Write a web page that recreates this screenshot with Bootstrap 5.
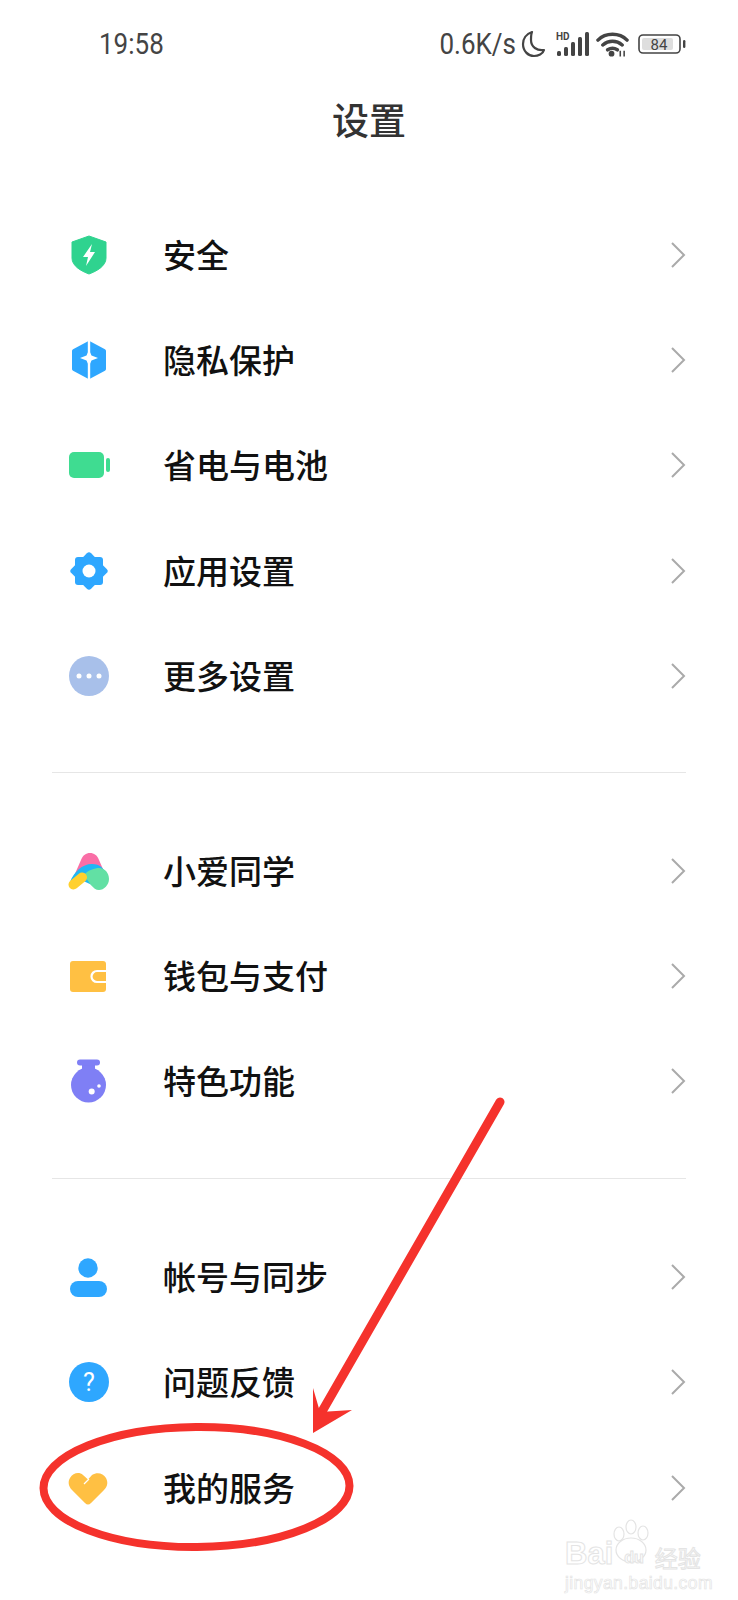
<!DOCTYPE html>
<html lang="zh">
<head>
  <meta charset="UTF-8">
  <meta name="viewport" content="width=device-width, initial-scale=1.0">
  <title>设置</title>
  <link href="https://cdn.jsdelivr.net/npm/bootstrap@5.3.0/dist/css/bootstrap.min.css" rel="stylesheet">
  <style>
    body { background: #fff; font-family: "Noto Sans CJK SC", "Noto Sans", sans-serif; }
    .phone-screen { position: relative; width: 738px; height: 1600px; overflow: hidden; }
    .status-row { height: 88px; padding: 0 52px 0 99px; font: 400 26px Roboto, sans-serif; color: #444; }
    .status-text { display: inline-block; transform: scaleY(1.14); }
    .status-icons { gap: 5px; }
    .page-title { height: 62px; margin: 0; font-size: 37px; font-weight: 500; line-height: 62px; color: #333; }
    .settings-list { --bs-list-group-border-width: 0; --bs-list-group-bg: transparent; }
    .settings-list .list-group-item { height: 105.4px; padding: 0 52px 0 67px; }
    .settings-list svg.row-icon { flex: none; width: 44px; height: 44px; }
    .row-label { margin-left: 52px; font-size: 33px; font-weight: 500; color: #111; line-height: 1; padding-bottom: 1px; }
    .row-arrow { flex: none; width: 16px; height: 28px; }
    .first-group { margin-top: 52px; }
    .group-rule { margin: 0 52px; height: 1px; background: #e6e6e6; }
    .rule-one { margin-top: 43px; margin-bottom: 45px; }
    .rule-two { margin-top: 44px; margin-bottom: 45px; }
    .markup-layer { position: absolute; inset: 0; width: 738px; height: 1600px; pointer-events: none; }
    .baidu-mark { position: absolute; left: 565px; top: 1538px; width: 140px; color: #fff; -webkit-text-stroke: 1px #e4e4e4; font-family: "Liberation Sans", sans-serif; }
    .baidu-paw { position: absolute; left: 42px; top: -20px; width: 50px; height: 50px; }
    .baidu-top { align-items: flex-end; line-height: 1; }
    .baidu-big { font-size: 31px; font-weight: 700; }
    .baidu-du { font-size: 16px; font-weight: 700; margin: 0 0 3px 11px; }
    .baidu-cn { font-size: 23px; font-family: "Noto Sans CJK SC", sans-serif; margin-left: 11px; }
    .baidu-url { font-size: 17.5px; line-height: 1; margin-top: 6px; letter-spacing: .4px; -webkit-text-stroke: .7px #e4e4e4; }
  </style>
</head>
<body>
<div class="phone-screen">

  <!-- status bar -->
  <div class="status-row d-flex align-items-center justify-content-between">
    <span class="status-text">19:58</span>
    <div class="status-icons d-flex align-items-center">
      <span class="status-text">0.6K/s</span>
      <svg width="25" height="28" viewBox="0 0 25 28"><path d="M11 2C5 4 2 9 2 14c0 7 5 12 11 12 4 0 9-2 10-6-7 1-13-3-13-10 0-3 0-6 1-8z" fill="none" stroke="#444" stroke-width="2.2" stroke-linejoin="round"/></svg>
      <svg width="36" height="28" viewBox="0 0 36 28" class="ms-1">
        <text x="1" y="10" font-family="Roboto, sans-serif" font-size="10" font-weight="700" fill="#444">HD</text>
        <rect x="2" y="21" width="4" height="5" rx="1.5" fill="#444"/>
        <rect x="9" y="17" width="4" height="9" rx="1.5" fill="#444"/>
        <rect x="16" y="12" width="4" height="14" rx="1.5" fill="#444"/>
        <rect x="23" y="7" width="4" height="19" rx="1.5" fill="#444"/>
        <rect x="30" y="2" width="4" height="24" rx="1.5" fill="#444"/>
      </svg>
      <svg width="33" height="28" viewBox="0 0 34 28">
        <path d="M2 10C10 2 24 2 32 10M7 15c6-5 14-5 20 0M12 20c3-2 7-2 10 0" fill="none" stroke="#444" stroke-width="3.600" stroke-linecap="round"/>
        <circle cx="16" cy="24" r="3" fill="#444"/>
        <path d="M25 21v6M29 21v6" stroke="#444" stroke-width="1.600"/>
      </svg>
      <svg width="48" height="20" viewBox="0 0 48 20" class="ms-1">
        <rect x="1" y="1" width="41" height="18" rx="4" fill="#fff" stroke="#444" stroke-width="1.600"/>
        <rect x="4" y="4" width="31" height="12" rx="2" fill="#dedede"/>
        <text x="21" y="15.500" text-anchor="middle" font-family="Roboto, sans-serif" font-size="15" fill="#444">84</text>
        <rect x="45" y="6" width="2.400" height="8" rx="1.200" fill="#444"/>
      </svg>
    </div>
  </div>

  <h1 class="page-title text-center">设置</h1>

  <div class="list-group list-group-flush settings-list first-group">
    <div class="list-group-item d-flex align-items-center">
      <svg class="row-icon" viewBox="0 0 44 44"><path d="M22 3l17 6v16c0 8-9 13-17 16C14 38 5 33 5 25V9z" fill="#2fd38f" stroke="#2fd38f" stroke-width="1" stroke-linejoin="round"/><path d="M25 11l-9 13h5l-2 9 9-14h-5z" fill="#fff"/></svg>
      <span class="row-label">安全</span>
      <svg class="row-arrow ms-auto" viewBox="0 0 16 28"><path d="M2 2l12 12L2 26" fill="none" stroke="#aaa" stroke-width="2"/></svg>
    </div>
    <div class="list-group-item d-flex align-items-center">
      <svg class="row-icon" viewBox="0 0 44 44"><path d="M22 5l15 8v18l-15 8-15-8V13z" fill="#2ea7ff" stroke="#2ea7ff" stroke-width="4" stroke-linejoin="round"/><path d="M22 1v42" stroke="#fff" stroke-width="2.400"/><path d="M22 12l2.500 5.500 6.500 2.500-6.500 2.500-2.500 5.500-2.500-5.500-6.500-2.500 6.500-2.500z" fill="#fff"/></svg>
      <span class="row-label">隐私保护</span>
      <svg class="row-arrow ms-auto" viewBox="0 0 16 28"><path d="M2 2l12 12L2 26" fill="none" stroke="#aaa" stroke-width="2"/></svg>
    </div>
    <div class="list-group-item d-flex align-items-center">
      <svg class="row-icon" viewBox="0 0 44 44"><rect x="2" y="9" width="35" height="26" rx="5" fill="#3fdc91"/><rect x="39" y="15" width="4" height="14" rx="2" fill="#3fdc91"/></svg>
      <span class="row-label">省电与电池</span>
      <svg class="row-arrow ms-auto" viewBox="0 0 16 28"><path d="M2 2l12 12L2 26" fill="none" stroke="#aaa" stroke-width="2"/></svg>
    </div>
    <div class="list-group-item d-flex align-items-center">
      <svg class="row-icon" viewBox="0 0 44 44"><rect x="8" y="8" width="28" height="28" rx="3" fill="#2ea7ff"/><rect x="8" y="8" width="28" height="28" rx="3" fill="#2ea7ff" transform="rotate(45 22 22)"/><circle cx="22" cy="22" r="6.500" fill="#fff"/></svg>
      <span class="row-label">应用设置</span>
      <svg class="row-arrow ms-auto" viewBox="0 0 16 28"><path d="M2 2l12 12L2 26" fill="none" stroke="#aaa" stroke-width="2"/></svg>
    </div>
    <div class="list-group-item d-flex align-items-center">
      <svg class="row-icon" viewBox="0 0 44 44"><circle cx="22" cy="22" r="20" fill="#a8c0ea"/><circle cx="12" cy="22" r="2.500" fill="#fff"/><circle cx="22" cy="22" r="2.500" fill="#fff"/><circle cx="32" cy="22" r="2.500" fill="#fff"/></svg>
      <span class="row-label">更多设置</span>
      <svg class="row-arrow ms-auto" viewBox="0 0 16 28"><path d="M2 2l12 12L2 26" fill="none" stroke="#aaa" stroke-width="2"/></svg>
    </div>
  </div>

  <div class="group-rule rule-one"></div>

  <div class="list-group list-group-flush settings-list">
    <div class="list-group-item d-flex align-items-center">
      <svg class="row-icon" viewBox="0 0 44 44">
        <path d="M23 4c4 0 7 2 9 7l7 16H7l7-16c2-5 5-7 9-7z" fill="#f96ea6"/>
        <path d="M3 33C7 23 15 15 25 15c8 0 12 4 15 12L25 36 12 30l-5 8z" fill="#1fb6f5"/>
        <path d="M17 26c4-5 11-7 15-7 6 0 10 5 10 11s-5 11-10 11c-6 0-10-8-15-15z" fill="#62e0a4"/>
        <path d="M6.500 35.500L15 28.500" stroke="#ffd02e" stroke-width="10" stroke-linecap="round"/>
      </svg>
      <span class="row-label">小爱同学</span>
      <svg class="row-arrow ms-auto" viewBox="0 0 16 28"><path d="M2 2l12 12L2 26" fill="none" stroke="#aaa" stroke-width="2"/></svg>
    </div>
    <div class="list-group-item d-flex align-items-center">
      <svg class="row-icon" viewBox="0 0 44 44"><rect x="3" y="7" width="36" height="31" rx="3" fill="#ffc043"/><path d="M39 17H30a5.500 5.500 0 0 0 0 11h9" fill="#ffc043" stroke="#fff" stroke-width="2.200"/></svg>
      <span class="row-label">钱包与支付</span>
      <svg class="row-arrow ms-auto" viewBox="0 0 16 28"><path d="M2 2l12 12L2 26" fill="none" stroke="#aaa" stroke-width="2"/></svg>
    </div>
    <div class="list-group-item d-flex align-items-center">
      <svg class="row-icon" viewBox="0 0 44 44"><circle cx="21.500" cy="26" r="17.500" fill="#7f7ff5"/><rect x="15" y="4" width="13" height="9" fill="#7f7ff5"/><rect x="10" y="0.500" width="23" height="6" rx="3" fill="#7f7ff5"/><circle cx="24.700" cy="32.500" r="3" fill="#fff"/><circle cx="32" cy="27" r="1.800" fill="#fff"/></svg>
      <span class="row-label">特色功能</span>
      <svg class="row-arrow ms-auto" viewBox="0 0 16 28"><path d="M2 2l12 12L2 26" fill="none" stroke="#aaa" stroke-width="2"/></svg>
    </div>
  </div>

  <div class="group-rule rule-two"></div>

  <div class="list-group list-group-flush settings-list">
    <div class="list-group-item d-flex align-items-center">
      <svg class="row-icon" viewBox="0 0 44 44"><circle cx="21" cy="13" r="9.700" fill="#2ea7ff"/><rect x="3" y="26" width="37" height="16" rx="8" fill="#2ea7ff"/></svg>
      <span class="row-label">帐号与同步</span>
      <svg class="row-arrow ms-auto" viewBox="0 0 16 28"><path d="M2 2l12 12L2 26" fill="none" stroke="#aaa" stroke-width="2"/></svg>
    </div>
    <div class="list-group-item d-flex align-items-center">
      <svg class="row-icon" viewBox="0 0 44 44"><circle cx="22" cy="22" r="20" fill="#2ea7ff"/><text x="22" y="31" text-anchor="middle" font-family="Roboto, sans-serif" font-size="25" font-weight="400" fill="#fff">?</text></svg>
      <span class="row-label">问题反馈</span>
      <svg class="row-arrow ms-auto" viewBox="0 0 16 28"><path d="M2 2l12 12L2 26" fill="none" stroke="#aaa" stroke-width="2"/></svg>
    </div>
    <div class="list-group-item d-flex align-items-center">
      <svg class="row-icon" viewBox="0 0 44 44"><path d="M21 38.500c-1 0-2-.5-3-1.500L5 24C1 20 1 15 3 12c3-5 9-6.500 13-3l5 4.500 4-4.500c5-3 11-2 14 3 2 4 2 8-2 12L24 37c-1 1-2 1.500-3 1.500z" fill="#ffc043"/><path d="M17 18l5-5" stroke="#fff" stroke-width="1.200"/></svg>
      <span class="row-label">我的服务</span>
      <svg class="row-arrow ms-auto" viewBox="0 0 16 28"><path d="M2 2l12 12L2 26" fill="none" stroke="#aaa" stroke-width="2"/></svg>
    </div>
  </div>

  <!-- red annotation drawn over the screenshot -->
  <svg class="markup-layer" viewBox="0 0 738 1600">
    <ellipse cx="196.500" cy="1487" rx="153" ry="60" fill="none" stroke="#f5322c" stroke-width="8" transform="rotate(-0.500 196.500 1487)"/>
    <path d="M500 1102L320 1415" stroke="#f5322c" stroke-width="9" stroke-linecap="round"/>
    <path d="M313 1388L320 1412 352 1410 313 1433z" fill="#f5322c"/>
  </svg>

  <!-- watermark -->
  <div class="baidu-mark">
    <svg class="baidu-paw" viewBox="0 0 50 50" aria-hidden="true">
      <g fill="#fff" stroke="#e4e4e4" stroke-width="1.200"><ellipse cx="12" cy="16" rx="5" ry="7"/><ellipse cx="24" cy="9" rx="5" ry="7"/><ellipse cx="36" cy="15" rx="5" ry="7"/><ellipse cx="24" cy="32" rx="15" ry="12"/></g>
    </svg>
    <div class="baidu-top d-flex position-relative">
      <span class="baidu-big">Bai</span><span class="baidu-du">du</span><span class="baidu-cn">经验</span>
    </div>
    <div class="baidu-url position-relative">jingyan.baidu.com</div>
  </div>

</div>
<script src="https://cdn.jsdelivr.net/npm/bootstrap@5.3.0/dist/js/bootstrap.bundle.min.js"></script>
</body>
</html>
